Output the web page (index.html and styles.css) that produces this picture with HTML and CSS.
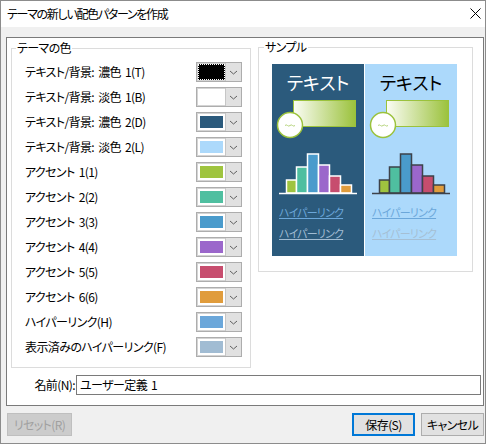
FILE: index.html
```html
<!DOCTYPE html>
<html lang="ja">
<head>
<meta charset="utf-8">
<title>テーマの新しい配色パターンを作成</title>
<link rel="stylesheet" href="styles.css">
</head>
<body>
<div class="window">
  <div class="titlebar">
    <span class="title">テーマの新しい配色パターンを作成</span>
    <svg class="close" width="11" height="11" viewBox="0 0 11 11"><path d="M0.5 0.5 L10.5 10.5 M10.5 0.5 L0.5 10.5" stroke="#000" stroke-width="1" fill="none"/></svg>
  </div>
  <div class="body">
    <div class="panel">
      <div class="groups">
        <fieldset class="group theme">
          <legend>テーマの色</legend>
          <div class="rows">
            <div class="row"><span>テキスト/背景: 濃色 1(T)</span><div class="picker"><span class="sw focus"><i class="c1"></i></span><span class="dd"><svg width="15" height="18" viewBox="0 0 15 18"><polyline points="4,8 7.5,11 11,8" fill="none" stroke="#606060" stroke-width="1"/></svg></span></div></div>
            <div class="row"><span>テキスト/背景: 淡色 1(B)</span><div class="picker"><span class="sw"><i class="c2"></i></span><span class="dd"><svg width="15" height="18" viewBox="0 0 15 18"><polyline points="4,8 7.5,11 11,8" fill="none" stroke="#606060" stroke-width="1"/></svg></span></div></div>
            <div class="row"><span>テキスト/背景: 濃色 2(D)</span><div class="picker"><span class="sw"><i class="c3"></i></span><span class="dd"><svg width="15" height="18" viewBox="0 0 15 18"><polyline points="4,8 7.5,11 11,8" fill="none" stroke="#606060" stroke-width="1"/></svg></span></div></div>
            <div class="row"><span>テキスト/背景: 淡色 2(L)</span><div class="picker"><span class="sw"><i class="c4"></i></span><span class="dd"><svg width="15" height="18" viewBox="0 0 15 18"><polyline points="4,8 7.5,11 11,8" fill="none" stroke="#606060" stroke-width="1"/></svg></span></div></div>
            <div class="row"><span>アクセント 1(1)</span><div class="picker"><span class="sw"><i class="c5"></i></span><span class="dd"><svg width="15" height="18" viewBox="0 0 15 18"><polyline points="4,8 7.5,11 11,8" fill="none" stroke="#606060" stroke-width="1"/></svg></span></div></div>
            <div class="row"><span>アクセント 2(2)</span><div class="picker"><span class="sw"><i class="c6"></i></span><span class="dd"><svg width="15" height="18" viewBox="0 0 15 18"><polyline points="4,8 7.5,11 11,8" fill="none" stroke="#606060" stroke-width="1"/></svg></span></div></div>
            <div class="row"><span>アクセント 3(3)</span><div class="picker"><span class="sw"><i class="c7"></i></span><span class="dd"><svg width="15" height="18" viewBox="0 0 15 18"><polyline points="4,8 7.5,11 11,8" fill="none" stroke="#606060" stroke-width="1"/></svg></span></div></div>
            <div class="row"><span>アクセント 4(4)</span><div class="picker"><span class="sw"><i class="c8"></i></span><span class="dd"><svg width="15" height="18" viewBox="0 0 15 18"><polyline points="4,8 7.5,11 11,8" fill="none" stroke="#606060" stroke-width="1"/></svg></span></div></div>
            <div class="row"><span>アクセント 5(5)</span><div class="picker"><span class="sw"><i class="c9"></i></span><span class="dd"><svg width="15" height="18" viewBox="0 0 15 18"><polyline points="4,8 7.5,11 11,8" fill="none" stroke="#606060" stroke-width="1"/></svg></span></div></div>
            <div class="row"><span>アクセント 6(6)</span><div class="picker"><span class="sw"><i class="c10"></i></span><span class="dd"><svg width="15" height="18" viewBox="0 0 15 18"><polyline points="4,8 7.5,11 11,8" fill="none" stroke="#606060" stroke-width="1"/></svg></span></div></div>
            <div class="row"><span>ハイパーリンク(H)</span><div class="picker"><span class="sw"><i class="c11"></i></span><span class="dd"><svg width="15" height="18" viewBox="0 0 15 18"><polyline points="4,8 7.5,11 11,8" fill="none" stroke="#606060" stroke-width="1"/></svg></span></div></div>
            <div class="row"><span>表示済みのハイパーリンク(F)</span><div class="picker"><span class="sw"><i class="c12"></i></span><span class="dd"><svg width="15" height="18" viewBox="0 0 15 18"><polyline points="4,8 7.5,11 11,8" fill="none" stroke="#606060" stroke-width="1"/></svg></span></div></div>
          </div>
        </fieldset>
        <fieldset class="group sample">
          <legend>サンプル</legend>
          <div class="preview">
            <div class="col dark">
              <div class="heading">テキスト</div>
              <svg class="art" width="92" height="104" viewBox="0 0 92 104">
                <defs>
                  <linearGradient id="gd" x1="0" y1="0" x2="1" y2="0">
                    <stop offset="0" stop-color="#fbfdf5"/>
                    <stop offset="1" stop-color="#9bc23c"/>
                  </linearGradient>
                </defs>
                <rect x="21.5" y="6.5" width="62" height="26" fill="url(#gd)" stroke="#9bc23c" stroke-width="1"/>
                <circle cx="18" cy="31" r="12.5" fill="#fff" stroke="#9bc23c" stroke-width="1.5"/>
                <path d="M13 31.5 q1.25 -1.2 2.5 0 t2.5 0 t2.5 0 t2.5 0" fill="none" stroke="#b5d37a" stroke-width="1"/>
                <g stroke="#fff" stroke-width="1.5">
                  <rect x="14.5" y="86" width="10" height="13" fill="#9fc43f"/>
                  <rect x="24.5" y="73" width="11" height="26" fill="#4fbfa0"/>
                  <rect x="35.5" y="60" width="11" height="39" fill="#4a9bcc"/>
                  <rect x="46.5" y="71" width="11" height="28" fill="#9b67cb"/>
                  <rect x="57.5" y="82" width="11" height="17" fill="#c74d6e"/>
                  <rect x="68.5" y="91" width="11" height="8" fill="#e09c3c"/>
                  <line x1="7" y1="99.5" x2="85" y2="99.5"/>
                </g>
              </svg>
              <div class="links">
                <span class="link">ハイパーリンク</span>
                <span class="link visited">ハイパーリンク</span>
              </div>
            </div>
            <div class="col light">
              <div class="heading">テキスト</div>
              <svg class="art" width="92" height="104" viewBox="0 0 92 104">
                <defs>
                  <linearGradient id="gl" x1="0" y1="0" x2="1" y2="0">
                    <stop offset="0" stop-color="#fbfdf5"/>
                    <stop offset="1" stop-color="#9bc23c"/>
                  </linearGradient>
                </defs>
                <rect x="21.5" y="6.5" width="62" height="26" fill="url(#gl)" stroke="#9bc23c" stroke-width="1"/>
                <circle cx="18" cy="31" r="12.5" fill="#fff" stroke="#9bc23c" stroke-width="1.5"/>
                <path d="M13 31.5 q1.25 -1.2 2.5 0 t2.5 0 t2.5 0 t2.5 0" fill="none" stroke="#b5d37a" stroke-width="1"/>
                <g stroke="#3d424a" stroke-width="1.5">
                  <rect x="14.5" y="86" width="10" height="13" fill="#9fc43f"/>
                  <rect x="24.5" y="73" width="11" height="26" fill="#4fbfa0"/>
                  <rect x="35.5" y="60" width="11" height="39" fill="#4a9bcc"/>
                  <rect x="46.5" y="71" width="11" height="28" fill="#9b67cb"/>
                  <rect x="57.5" y="82" width="11" height="17" fill="#c74d6e"/>
                  <rect x="68.5" y="91" width="11" height="8" fill="#e09c3c"/>
                  <line x1="7" y1="99.5" x2="85" y2="99.5"/>
                </g>
              </svg>
              <div class="links">
                <span class="link">ハイパーリンク</span>
                <span class="link visited">ハイパーリンク</span>
              </div>
            </div>
          </div>
        </fieldset>
      </div>
      <div class="name-row">
        <label class="name-label">名前(N):</label>
        <div class="input">ユーザー定義 1</div>
      </div>
    </div>
    <div class="buttons">
      <button class="btn reset" disabled>リセット(R)</button>
      <span class="spacer"></span>
      <button class="btn default">保存(S)</button>
      <button class="btn">キャンセル</button>
    </div>
  </div>
</div>
</body>
</html>
```

FILE: styles.css
```css
* {
  box-sizing: border-box;
}

html, body {
  margin: 0;
  padding: 0;
}

body {
  font-family: "Noto Sans CJK JP", "Noto Sans", sans-serif;
  font-size: 12px;
  font-feature-settings: "palt";
  letter-spacing: -0.6px;
  word-spacing: 2px;
  color: #000;
  background: #fff;
}

.window {
  width: 486px;
  height: 444px;
  border: 1px solid #8c8c8c;
  background: #f0f0f0;
  display: flex;
  flex-direction: column;
}

.titlebar {
  height: 26px;
  background: #fff;
  display: flex;
  align-items: center;
  justify-content: space-between;
  padding: 0 4px 0 6px;
  flex: none;
}

.title {
  font-size: 12px;
  line-height: 16px;
  letter-spacing: -1.3px;
}

.close {
  display: block;
  margin-top: -1px;
}

.body {
  flex: 1;
  display: flex;
  flex-direction: column;
  padding: 10px 1px 0 5px;
}

.panel {
  height: 369px;
  background: #fff;
  border: 1px solid #7a7a7a;
  flex: none;
}

.groups {
  display: flex;
  align-items: flex-start;
  padding-top: 1px;
}

.group {
  margin: 0;
  padding: 0;
  border: 1px solid #dcdcdc;
  min-width: 0;
}

.group legend {
  line-height: 16px;
  padding: 0 1px;
  margin-left: 4px;
}

.theme {
  margin-top: 1px;
  margin-left: 4px;
  width: 240px;
  height: 328px;
}

.sample {
  margin-left: 7px;
  width: 215px;
  height: 233px;
}

.sample legend {
  margin-left: 5px;
}

.rows {
  display: flex;
  flex-direction: column;
  gap: 5px;
  padding: 6px 8px 0 13px;
}

.row {
  height: 20px;
  display: flex;
  align-items: center;
  justify-content: space-between;
  line-height: 16px;
}

.picker {
  width: 46px;
  height: 20px;
  display: flex;
  border: 1px solid #adadad;
  box-shadow: inset 0 0 0 1px #d4d4d4;
  background: #fff;
}

.sw {
  flex: 1;
  padding: 3px 2px 2px 3px;
  display: flex;
}

.sw i {
  display: block;
  width: 23px;
  height: 12px;
}

.sw.focus i {
  box-shadow: 0 0 0 2px #000;
  outline: 1px dotted #fff;
  outline-offset: 1px;
}

.dd {
  width: 16px;
  background: #e1e1e1;
  border-left: 1px solid #c6c6c6;
  display: flex;
  align-items: center;
  justify-content: center;
}

.dd svg {
  display: block;
}

.c1 { background: #000000; }
.c2 { background: #ffffff; }
.c3 { background: #2b5a7c; }
.c4 { background: #acd9fb; }
.c5 { background: #9fc43f; }
.c6 { background: #4fbfa0; }
.c7 { background: #4a9bcc; }
.c8 { background: #9b67cb; }
.c9 { background: #c74d6e; }
.c10 { background: #e09c3c; }
.c11 { background: #6ba7da; }
.c12 { background: #a1bcd3; }

.preview {
  margin: 9px 0 0 13px;
  width: 185px;
  height: 192px;
  display: flex;
  gap: 1px;
  background: #fff;
}

.col {
  width: 92px;
  display: flex;
  flex-direction: column;
}

.col.dark {
  background: #2b5a7c;
}

.col.light {
  background: #acd9fb;
}

.heading {
  margin-top: 6px;
  height: 24px;
  line-height: 24px;
  font-size: 18px;
  letter-spacing: 0;
  text-align: center;
}

.dark .heading {
  color: #fff;
}

.light .heading {
  color: #000;
}

.art {
  display: block;
  flex: none;
}

.links {
  margin-top: 4px;
  padding-left: 7px;
  display: flex;
  flex-direction: column;
  align-items: flex-start;
}

.link {
  font-size: 11px;
  line-height: 21px;
  letter-spacing: -0.8px;
  text-decoration: underline;
  color: #6ba7da;
}

.link.visited {
  color: #a1bcd3;
}

.light .link.visited {
  color: #a5bfd4;
}

.name-row {
  margin-top: 7px;
  display: flex;
  align-items: center;
}

.name-label {
  flex: none;
  width: 68px;
  display: flex;
  justify-content: flex-end;
  white-space: nowrap;
  line-height: 16px;
}

.input {
  flex: 1;
  height: 20px;
  margin-left: 1px;
  margin-right: 2px;
  border: 1px solid #7a7a7a;
  padding-left: 3px;
  line-height: 18px;
}

.buttons {
  display: flex;
  gap: 6px;
  padding-top: 7px;
}

.spacer {
  flex: 1;
}

.btn {
  font-family: inherit;
  font-size: 12px;
  font-feature-settings: "palt";
  letter-spacing: -0.6px;
  height: 23px;
  width: 63px;
  padding: 0;
  margin: 0;
  background: #e1e1e1;
  border: 1px solid #adadad;
  color: #000;
  line-height: 16px;
}

.btn.reset {
  width: 65px;
  margin-left: 1px;
  background: #cccccc;
  border-color: #bfbfbf;
  color: #a0a0a0;
}

.btn.default {
  border: 2px solid #0078d7;
}
```
